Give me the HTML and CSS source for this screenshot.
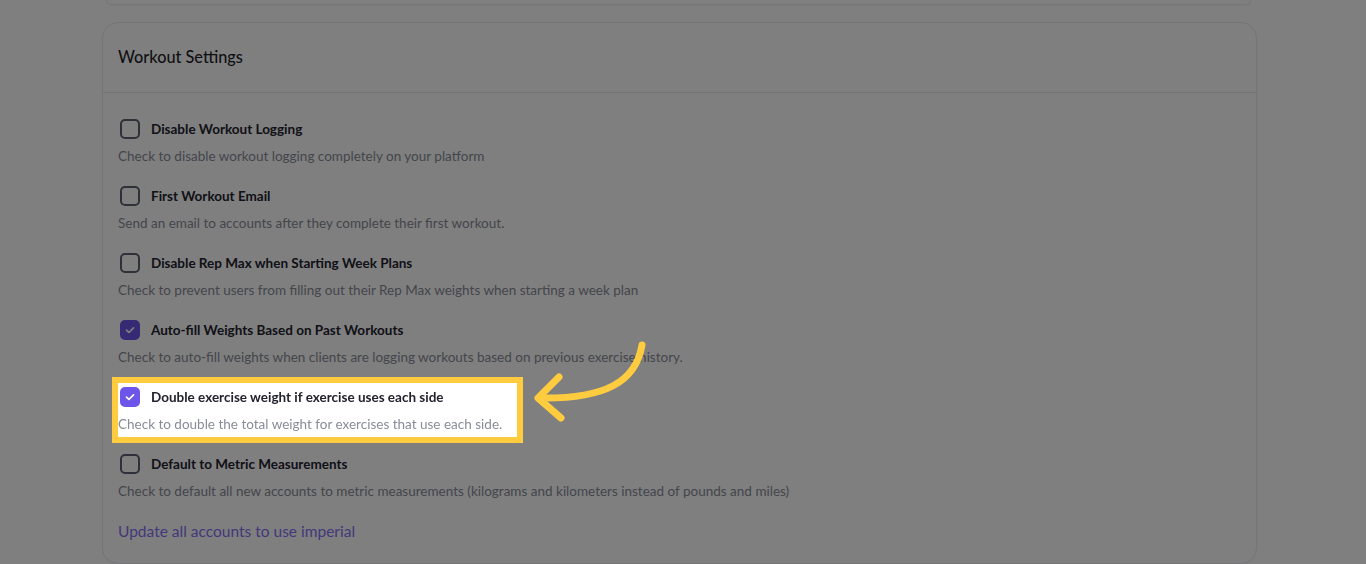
FILE: index.html
```html
<!DOCTYPE html>
<html lang="en">
<head>
<meta charset="utf-8">
<title>Workout Settings</title>
<link rel="stylesheet" href="styles.css">
</head>
<body>
<main class="page">
  <div class="card card-tail"></div>

  <section class="card">
    <header class="card-header">
      <h2 class="card-title">Workout Settings</h2>
    </header>
    <div class="card-body">
      <div class="setting">
        <div class="setting-row"><span class="check"></span><span class="setting-label">Disable Workout Logging</span></div>
        <p class="setting-desc">Check to disable workout logging completely on your platform</p>
      </div>
      <div class="setting">
        <div class="setting-row"><span class="check"></span><span class="setting-label">First Workout Email</span></div>
        <p class="setting-desc">Send an email to accounts after they complete their first workout.</p>
      </div>
      <div class="setting">
        <div class="setting-row"><span class="check"></span><span class="setting-label">Disable Rep Max when Starting Week Plans</span></div>
        <p class="setting-desc">Check to prevent users from filling out their Rep Max weights when starting a week plan</p>
      </div>
      <div class="setting">
        <div class="setting-row"><span class="check is-checked"><svg viewBox="0 0 20 20"><path d="M5.6 10.2l3 2.9L14.4 7.3"/></svg></span><span class="setting-label">Auto-fill Weights Based on Past Workouts</span></div>
        <p class="setting-desc">Check to auto-fill weights when clients are logging workouts based on previous exercise history.</p>
      </div>
      <div class="setting setting-highlight">
        <div class="setting-row"><span class="check is-checked"><svg viewBox="0 0 20 20"><path d="M5.6 10.2l3 2.9L14.4 7.3"/></svg></span><span class="setting-label">Double exercise weight if exercise uses each side</span></div>
        <p class="setting-desc">Check to double the total weight for exercises that use each side.</p>
      </div>
      <div class="setting">
        <div class="setting-row"><span class="check"></span><span class="setting-label">Default to Metric Measurements</span></div>
        <p class="setting-desc">Check to default all new accounts to metric measurements (kilograms and kilometers instead of pounds and miles)</p>
      </div>
      <a class="link" href="#">Update all accounts to use imperial</a>
    </div>
  </section>
</main>

<div class="overlay"></div>

<svg class="arrow" viewBox="0 0 130 100" width="130" height="100">
  <path d="M114 9 C108 46, 77 63, 12 62" />
  <path d="M31 41 L10 62 L33 82" />
</svg>
</body>
</html>
```

FILE: styles.css
```css
* { box-sizing: border-box; }

html, body {
  margin: 0;
  padding: 0;
  background: #ffffff;
  font-family: Lato, "Liberation Sans", sans-serif;
  color: #22222e;
  overflow: hidden;
}

.page {
  width: 1155px;
  margin-left: 102px;
  display: flex;
  flex-direction: column;
  gap: 17px;
}

.card {
  background: #ffffff;
  border: 1px solid #ebebef;
  border-radius: 16px;
  box-shadow: 0 1px 3px rgba(0, 0, 0, 0.04);
}

.card-tail {
  height: 5px;
  border-top: none;
  border-radius: 0 0 16px 16px;
  margin: 0 6px 0 4px;
}

.card-header {
  height: 70px;
  display: flex;
  align-items: center;
  padding: 0 15px 3px;
  border-bottom: 1px solid #ebebef;
}

.card-title {
  margin: 0;
  font-size: 16.3px;
  font-weight: 500;
  color: #1f1f2b;
}

.card-body {
  padding: 26px 15px 22px;
  display: flex;
  flex-direction: column;
  align-items: flex-start;
}

.setting {
  margin-bottom: 21px;
}

.setting-row {
  display: flex;
  align-items: center;
  gap: 11px;
  height: 20px;
}

.check {
  width: 20px;
  height: 20px;
  margin-left: 2px;
  border: 2px solid #5f6272;
  border-radius: 5px;
  display: flex;
  align-items: center;
  justify-content: center;
  flex: none;
}

.check.is-checked {
  background: #6e55e9;
  border-color: #6e55e9;
}

.check svg {
  width: 20px;
  height: 20px;
  fill: none;
  stroke: #ffffff;
  stroke-width: 2.1;
  stroke-linecap: round;
  stroke-linejoin: round;
}

.setting-label {
  font-size: 13.5px;
  font-weight: 700;
  color: #23232f;
}

.setting-desc {
  margin: 8px 0 0;
  font-size: 13.5px;
  line-height: 18px;
  color: #888c98;
}

.setting-highlight {
  position: relative;
  z-index: 2;
  background: #ffffff;
  padding: 4px 15px 4px 0;
  margin: -4px -15px 17px 0;
  outline: 6px solid #ffcc3f;
}

.link {
  font-size: 15.5px;
  line-height: 20px;
  color: #8670f5;
  text-decoration: none;
}

.overlay {
  position: fixed;
  inset: 0;
  background: rgba(0, 0, 0, 0.5);
  z-index: 1;
}

.arrow {
  position: absolute;
  left: 528px;
  top: 336px;
  z-index: 3;
  fill: none;
  stroke: #ffcc3f;
  stroke-width: 7;
  stroke-linecap: round;
  stroke-linejoin: round;
}
```
